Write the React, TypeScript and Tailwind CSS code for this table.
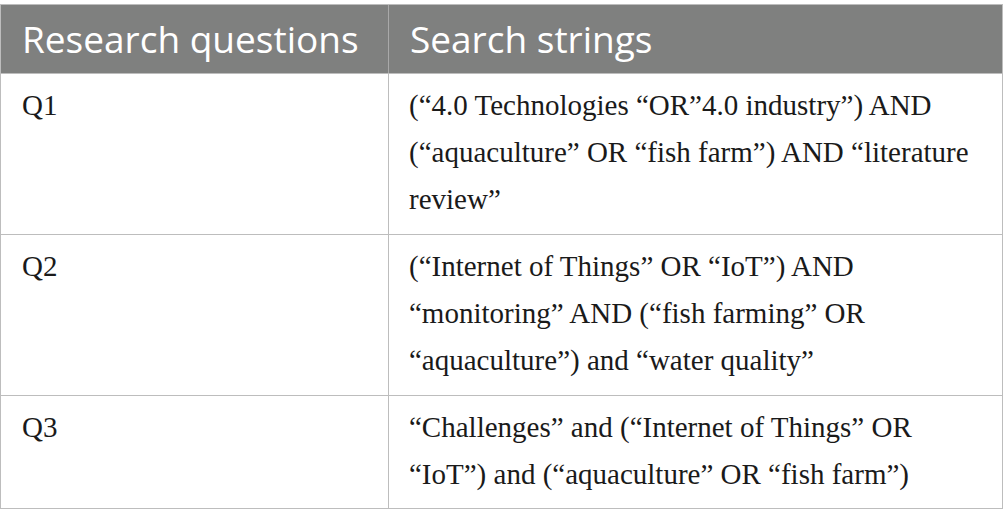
import React from 'react';

const rows = [
  {
    q: 'Q1',
    lines: [
      '(“4.0 Technologies “OR”4.0 industry”) AND',
      '(“aquaculture” OR “fish farm”) AND “literature',
      'review”',
    ],
    h: 'h-[161px]',
  },
  {
    q: 'Q2',
    lines: [
      '(“Internet of Things” OR “IoT”) AND',
      '“monitoring” AND (“fish farming” OR',
      '“aquaculture”) and “water quality”',
    ],
    h: 'h-[161px]',
  },
  {
    q: 'Q3',
    lines: ['“Challenges” and (“Internet of Things” OR', '“IoT”) and (“aquaculture” OR “fish farm”)'],
    h: 'h-[113px]',
  },
];

export default function App() {
  return (
    <div className="w-[1004px] h-[525px] bg-white pt-[4px]">
      <div className="w-[1003px] border border-[#bdbdbd]">
        <div className="grid grid-cols-[388px_1fr] h-[68px] bg-[#7f807f] font-['Open_Sans',sans-serif] text-[37px] text-white">
          <div className="flex items-center pl-[21px] border-r border-[#a9a9a9]">Research questions</div>
          <div className="flex items-center pl-[21px]">Search strings</div>
        </div>
        {rows.map((r) => (
          <div
            key={r.q}
            className={`grid grid-cols-[388px_1fr] ${r.h} border-t border-[#bdbdbd] font-['Liberation_Serif',serif] text-[29px] leading-[47px] text-[#1a1a1a]`}
          >
            <div className="pl-[21px] pt-[8px] border-r border-[#bdbdbd]">{r.q}</div>
            <div className="pl-[20px] pt-[8px] whitespace-nowrap">
              {r.lines.map((l, i) => (
                <div key={i}>{l}</div>
              ))}
            </div>
          </div>
        ))}
      </div>
    </div>
  );
}
